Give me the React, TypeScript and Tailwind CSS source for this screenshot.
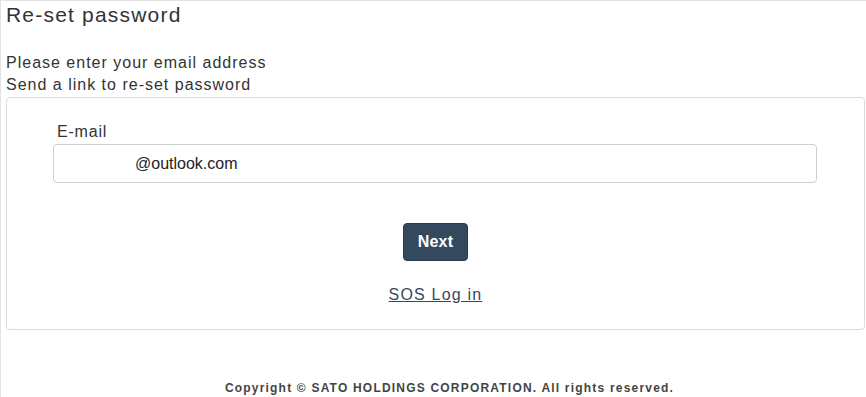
import React from "react";

export default function App() {
  return (
    <div
      className="w-[866px] h-[397px] bg-white border-l border-t border-[#e3e3e3] text-[#333] overflow-hidden"
      style={{ fontFamily: '"Liberation Sans", Arial, sans-serif' }}
    >
      <div className="pl-[5px] pr-[1px]">
        <h1 className="text-[21px] leading-[28px] tracking-[1.2px] font-normal">
          Re-set password
        </h1>
        <div className="mt-[23px] text-[16px] leading-[22px] tracking-[1px]">
          <p>Please enter your email address</p>
          <p>Send a link to re-set password</p>
        </div>
        <div className="mt-[1px] h-[233px] border border-[#dcdcdc] rounded-[4px] flex flex-col">
          <div className="pl-[46px] pr-[47px] pt-[24px]">
            <label className="block text-[16px] leading-[20px] tracking-[0.8px] pl-[4px]">
              E-mail
            </label>
            <input
              type="text"
              defaultValue="@outlook.com"
              className="mt-[2px] w-full h-[39px] border border-[#cfcfcf] rounded-[4px] pl-[81px] text-[16px] text-[#222] outline-none"
            />
          </div>
          <div className="flex justify-center mt-[40px]">
            <button className="h-[38px] px-[14px] rounded-[4px] bg-[#34495e] text-white text-[16px] font-bold tracking-[0.2px] border border-[#2a3b4c]">
              Next
            </button>
          </div>
          <div className="flex justify-center mt-[22px]">
            <a href="#" className="text-[#34495e] underline text-[16px] tracking-[1.2px]">
              SOS Log in
            </a>
          </div>
        </div>
        <footer className="mt-[49px] pl-[28px] text-center text-[12px] font-bold tracking-[1.2px] text-[#444]">
          Copyright © SATO HOLDINGS CORPORATION. All rights reserved.
        </footer>
      </div>
    </div>
  );
}
